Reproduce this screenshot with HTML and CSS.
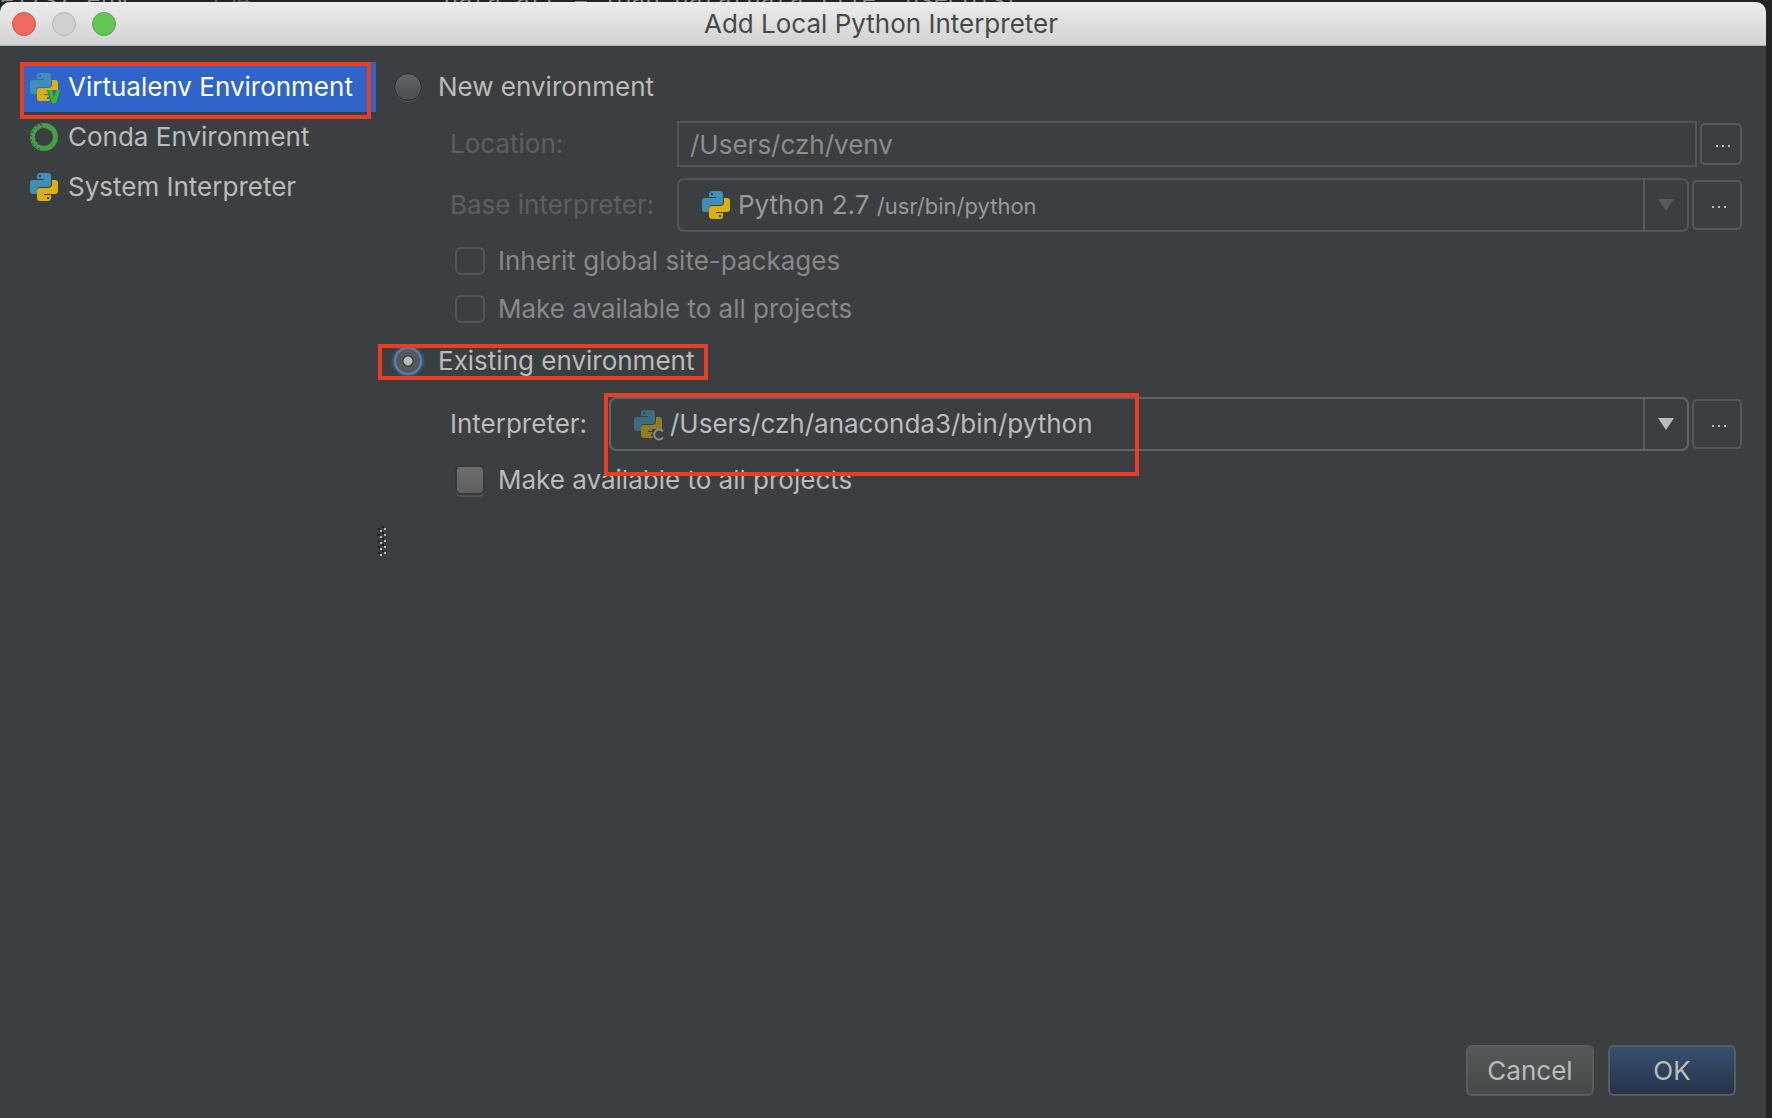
FILE: index.html
```html
<!DOCTYPE html>
<html lang="en">
<head>
<meta charset="utf-8">
<title>Add Local Python Interpreter</title>
<link rel="stylesheet" href="styles.css">
</head>
<body>
<svg class="defs" aria-hidden="true">
  <symbol id="python" viewBox="0 0 28 28">
    <path class="snake-blue" fill-rule="evenodd" d="M7 3Q7 0 10 0H18Q21 0 21 3V11Q21 14 18 14H10Q7 14 7 17V21H3Q0 21 0 18V10Q0 7 3 7H14V6H7ZM9 2V4H11V2Z"/>
    <path class="snake-yellow" fill-rule="evenodd" d="M22 7H25Q28 7 28 10V18Q28 21 25 21H14V22H21V25Q21 28 18 28H10Q7 28 7 25V18Q7 15 10 15H18Q22 15 22 11ZM17 24V26H19V24Z"/>
  </symbol>
</svg>
<div class="backdrop" aria-hidden="true">
  <span class="code-a">el7s7.env</span>
  <span class="code-b">154</span>
  <span>data_arr = load_data(data_file, usecols(</span>
</div>
<div class="window">
  <header class="titlebar">
    <div class="lights">
      <button class="light close" aria-label="Close"></button>
      <button class="light minimize" aria-label="Minimize" disabled></button>
      <button class="light zoom" aria-label="Zoom"></button>
    </div>
    <h1 class="title">Add Local Python Interpreter</h1>
  </header>
  <div class="content">
    <nav class="sidebar">
      <a href="#virtualenv" class="item selected">
        <svg class="icon" viewBox="0 0 28 28"><use href="#python"/><path class="cut-blue" d="M17 17H28V21L25 28H20Z"/><path class="vee" d="M18 17H22L24 24.500L26.500 17H30L26 30H22Z"/></svg>
        Virtualenv Environment
        <span class="mark mark-item"></span>
      </a>
      <a href="#conda" class="item">
        <svg class="icon" viewBox="0 0 28 28"><circle class="ring" cx="14" cy="14" r="11.500"/><path class="ring-gaps" d="M10 26A12.500 12.500 0 0 1 13 1.500M9 22A10 10 0 0 1 13 4.500"/></svg>
        Conda Environment
      </a>
      <a href="#system" class="item">
        <svg class="icon" viewBox="0 0 28 28"><use href="#python"/></svg>
        System Interpreter
      </a>
    </nav>
    <div class="grip" role="separator" aria-label="Resize"><svg width="8" height="32" viewBox="0 0 8 32"><path class="grip-dark" d="M1 2v28M5 0v28"/><path class="grip-light" d="M3 4v28M7 2v28"/></svg></div>
    <form class="form">
      <label class="choice"><input type="radio" name="env" class="radio">New environment</label>
      <div class="row row-location">
        <label class="label off" for="location">Location:</label>
        <input class="field" id="location" type="text" value="/Users/czh/venv" disabled>
        <button type="button" class="browse small" aria-label="Browse location" disabled><span class="dots"></span></button>
      </div>
      <div class="row row-combo">
        <label class="label off" for="base">Base interpreter:</label>
        <button type="button" class="combo off-combo" id="base" disabled>
          <svg class="icon" viewBox="0 0 28 28"><use href="#python"/></svg>
          <span class="value">Python 2.7 <span class="path">/usr/bin/python</span></span>
          <span class="arrow"></span>
        </button>
        <button type="button" class="browse" aria-label="Browse base interpreter" disabled><span class="dots"></span></button>
      </div>
      <label class="check off-check"><input type="checkbox" class="box" disabled>Inherit global site-packages</label>
      <label class="check off-check"><input type="checkbox" class="box" disabled>Make available to all projects</label>
      <label class="choice existing"><input type="radio" name="env" class="radio" checked>Existing environment<span class="mark mark-choice"></span></label>
      <div class="row row-combo">
        <label class="label fit" for="interp">Interpreter:</label>
        <button type="button" class="combo" id="interp">
          <svg class="icon" viewBox="0 0 28 28"><g class="faded"><use href="#python"/></g><path class="cut" d="M18 19H30V30H19Z"/><path class="cee" d="M29 21.300A5 5 0 1 0 29 27.700"/></svg>
          <span class="value">/Users/czh/anaconda3/bin/python</span>
          <span class="arrow"></span>
        </button>
        <button type="button" class="browse" aria-label="Browse interpreter"><span class="dots"></span></button>
        <span class="mark mark-interp"></span>
      </div>
      <label class="check"><input type="checkbox" class="box">Make available to all projects</label>
    </form>
  </div>
  <footer class="footer">
    <button type="button" class="action">Cancel</button>
    <button type="button" class="action primary">OK</button>
  </footer>
</div>
</body>
</html>
```
FILE: styles.css
```css
* { box-sizing: border-box; }
body {
  margin: 0;
  min-height: 100vh;
  display: flex;
  flex-direction: column;
  background: #242321;
  color: #bbb;
  font: 26px/32px Inter, "Liberation Sans", sans-serif;
}
button, input { font: inherit; color: inherit; margin: 0; padding: 0; }
.defs { position: absolute; width: 0; height: 0; }
.backdrop {
  height: 2px;
  overflow: hidden;
  display: flex;
  white-space: nowrap;
  color: #8493a3;
  font: 24px/2px "Liberation Mono", monospace;
}
.code-a { width: 208px; }
.code-b { width: 236px; color: #606366; }
.window {
  flex: 1;
  display: flex;
  flex-direction: column;
  margin-right: 6px;
  background: #3c3f41;
  border-radius: 10px 10px 0 0;
  overflow: hidden;
}
.titlebar {
  height: 44px;
  display: grid;
  grid-template-columns: 1fr auto 1fr;
  align-items: center;
  padding: 0 16px 0 12px;
  background: linear-gradient(#ececec, #d2d2d2);
  border-bottom: 1px solid #b0b0b0;
}
.lights { display: flex; gap: 16px; }
.light { width: 24px; height: 24px; border-radius: 50%; border: 1px solid; }
.close { background: #ee6a5e; border-color: #d9534a; }
.minimize { background: #d0d0d0; border-color: #b4b4b4; }
.zoom { background: #62c655; border-color: #4fac41; }
.title { margin: 0; font-size: 26px; font-weight: 400; color: #484848; }

.content { flex: 1; display: flex; padding: 16px 24px 0; }
.sidebar { width: 352px; }
.item {
  position: relative;
  height: 50px;
  display: flex;
  align-items: center;
  gap: 10px;
  padding-left: 6px;
  color: inherit;
  text-decoration: none;
  white-space: nowrap;
}
.selected { background: #2f65ca; color: #fff; }
.icon { width: 28px; height: 28px; flex: none; overflow: visible; }
.snake-blue { fill: #3f8fb7; }
.snake-yellow { fill: #dbb009; }
.selected .icon { color: #3d97d3; }
.cut-blue { fill: #2f65ca; }
.cut { fill: #3c3f41; }
.vee { fill: #3dba1e; }
.cee { fill: none; stroke: #8a8d90; stroke-width: 2; }
.ring { fill: none; stroke: #43a047; stroke-width: 5; }
.ring-gaps { fill: none; stroke: #3c3f41; stroke-width: 1; stroke-dasharray: 2 2; }
.faded { opacity: .55; }

.grip { width: 8px; padding-top: 464px; margin-left: 2px; }
.grip svg { display: block; }
.grip-dark { stroke: #1c1d1e; stroke-width: 2; stroke-dasharray: 2 4; }
.grip-light { stroke: #b4b4b4; stroke-width: 2; stroke-dasharray: 2 4; }

.form { flex: 1; min-width: 0; display: flex; flex-direction: column; padding-left: 8px; }
.choice { position: relative; display: flex; align-items: center; gap: 16px; height: 50px; align-self: flex-start; }
.existing { margin-top: 3px; }
.radio {
  appearance: none;
  width: 28px;
  height: 28px;
  border-radius: 50%;
  border: 1px solid #2b2b2b;
  background: linear-gradient(#616567, #4b4e50);
  box-shadow: 0 1px 1px #595c5e;
}
.radio:checked {
  border: 2px solid #5781b4;
  background: radial-gradient(circle, #b9b9b9 4px, #2e3031 5px, #54585a 6px);
  box-shadow: 0 0 3px 1px #466d9c;
}
.row { position: relative; display: flex; align-items: center; gap: 3px; padding-left: 56px; }
.row-location { height: 46px; margin-top: 9px; }
.row-combo { height: 54px; margin: 11px 0 5px; }
.label { width: 224px; flex: none; white-space: nowrap; }
.fit { width: 156px; }
.off { color: #5c5f61; }
.field {
  flex: 1;
  min-width: 0;
  height: 46px;
  padding: 0 11px;
  border: 2px solid #555;
  background: none;
  color: #8c8c8c;
}
.browse {
  width: 50px;
  height: 50px;
  flex: none;
  display: grid;
  place-items: center;
  padding: 4px 0 0 4px;
  border: 2px solid #56585a;
  border-radius: 5px;
  background: none;
}
.small { width: 42px; height: 42px; }
.dots { width: 2px; height: 2px; background: #bbb; box-shadow: -6px 0 #bbb, 6px 0 #bbb; }
.combo {
  flex: 1;
  min-width: 0;
  height: 54px;
  display: flex;
  align-items: center;
  gap: 8px;
  padding-left: 23px;
  border: 2px solid #646464;
  border-radius: 7px;
  background: none;
  text-align: left;
}
.off-combo { border-color: #555; color: #999; }
.value { flex: 1; white-space: nowrap; }
.path { font-size: 22px; }
.arrow { width: 44px; height: 50px; display: grid; place-items: center; border-left: 2px solid #5c5c5c; }
.arrow::before {
  content: "";
  border: 8px solid transparent;
  border-top: 12px solid #bbb;
  border-bottom: 0;
}
.off-combo .arrow::before { border-top-color: #5a5a5a; }
.check { display: flex; align-items: center; gap: 13px; height: 48px; padding-left: 61px; align-self: flex-start; }
.off-check { color: #888; }
.box {
  appearance: none;
  width: 30px;
  height: 30px;
  border: 2px solid #36393b;
  border-radius: 6px;
  background: linear-gradient(#6c6c6c, #5f5f5f);
  box-shadow: 0 2px #505355;
}
.box:disabled { height: 28px; border-color: #555; background: none; box-shadow: none; }

.mark { position: absolute; border: 4px solid #e63f24; pointer-events: none; }
.mark-item { inset: 0 5px -7px -4px; }
.mark-choice { inset: 8px -14px 6px -16px; }
.mark-interp { left: 210px; top: -4px; width: 535px; height: 83px; }

.footer { display: flex; justify-content: flex-end; gap: 14px; padding: 0 30px 22px; }
.action {
  width: 128px;
  height: 51px;
  border: 2px solid #5a5d5e;
  border-radius: 6px;
  background: linear-gradient(#545859, #444a4a);
}
.primary { background: linear-gradient(#365071, #263449); }
```
